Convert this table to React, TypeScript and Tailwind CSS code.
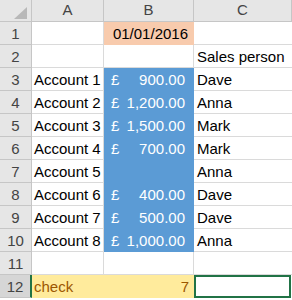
const font = { fontFamily: '"Liberation Sans", Arial, sans-serif' };

type Row = {
  a?: string;
  b?: { cur: string; amt: string } | null;
  c?: string;
};

const rows: Row[] = [
  {},
  { c: "Sales person" },
  { a: "Account 1", b: { cur: "£", amt: "900.00" }, c: "Dave" },
  { a: "Account 2", b: { cur: "£", amt: "1,200.00" }, c: "Anna" },
  { a: "Account 3", b: { cur: "£", amt: "1,500.00" }, c: "Mark" },
  { a: "Account 4", b: { cur: "£", amt: "700.00" }, c: "Mark" },
  { a: "Account 5", b: null, c: "Anna" },
  { a: "Account 6", b: { cur: "£", amt: "400.00" }, c: "Dave" },
  { a: "Account 7", b: { cur: "£", amt: "500.00" }, c: "Dave" },
  { a: "Account 8", b: { cur: "£", amt: "1,000.00" }, c: "Anna" },
  {},
];

function HeaderCell({ label }: { label: string }) {
  return (
    <div className="h-[22px] flex items-center justify-center bg-[#e6e6e6] border-r border-b border-[#c6c6c6] text-[15px] text-[#444]">
      {label}
    </div>
  );
}

function RowNum({ n, active }: { n: number; active?: boolean }) {
  return (
    <div
      className={
        "h-[23px] flex items-center justify-center border-b text-[15px] text-[#444] pt-[2px] " +
        (active
          ? "bg-[#d6d6d6] border-[#c6c6c6] border-r-2 border-r-[#217346]"
          : "bg-[#e6e6e6] border-[#c6c6c6] border-r")
      }
    >
      {n}
    </div>
  );
}

export default function App() {
  return (
    <div className="w-[292px] h-[300px] bg-white overflow-hidden text-black" style={font}>
      <div className="grid grid-cols-[32px_72px_90px_98px]">
        {/* corner with the select-all triangle */}
        <div className="h-[22px] bg-[#e6e6e6] border-r border-b border-[#c6c6c6] relative">
          <svg className="absolute left-0 top-0" width="31" height="21" viewBox="0 0 31 21">
            <polygon points="27,7 27,19 14,19" fill="#b8b8b8" />
          </svg>
        </div>
        <HeaderCell label="A" />
        <HeaderCell label="B" />
        <HeaderCell label="C" />

        {/* row 1: date */}
        <RowNum n={1} />
        <div className="h-[23px] border-r border-b border-[#dadada]" />
        <div className="h-[23px] bg-[#f8cbad] border-r border-b border-[#f8cbad] flex items-center justify-end pr-[5px] pt-[2px] text-[15px]">
          01/01/2016
        </div>
        <div className="h-[23px] border-b border-[#dadada]" />

        {rows.slice(1).map((r, i) => {
          const n = i + 2;
          const blue = n >= 3 && n <= 10;
          return [
            <RowNum key={`n${n}`} n={n} />,
            <div
              key={`a${n}`}
              className="h-[23px] border-r border-b border-[#dadada] flex items-center pl-[2px] pt-[2px] text-[15px] whitespace-nowrap"
            >
              {r.a}
            </div>,
            <div
              key={`b${n}`}
              className={
                "h-[23px] border-r border-b flex items-center pt-[2px] text-[15px] text-white " +
                (blue ? "bg-[#5b9bd5] border-[#5b9bd5]" : "border-[#dadada]")
              }
            >
              {r.b && (
                <>
                  <span className="pl-[7px]">{r.b.cur}</span>
                  <span className="ml-auto pr-[8px]">{r.b.amt}</span>
                </>
              )}
            </div>,
            <div
              key={`c${n}`}
              className="h-[23px] border-b border-[#dadada] flex items-center pl-[3px] pt-[2px] text-[15px] whitespace-nowrap"
            >
              {r.c}
            </div>,
          ];
        })}

        {/* row 12: check total */}
        <RowNum n={12} active />
        <div className="h-[23px] bg-[#ffeb9c] border-r border-b border-[#ffeb9c] flex items-center pl-[2px] pt-[2px] text-[15px] text-[#9c5700]">
          check
        </div>
        <div className="h-[23px] bg-[#ffeb9c] border-r border-b border-[#ffeb9c] flex items-center justify-end pr-[4px] pt-[2px] text-[15px] text-[#9c5700]">
          7
        </div>
        <div className="h-[23px] flex">
          <div className="w-[97px] h-[23px] border-2 border-[#217346] bg-white" />
        </div>
      </div>
    </div>
  );
}
